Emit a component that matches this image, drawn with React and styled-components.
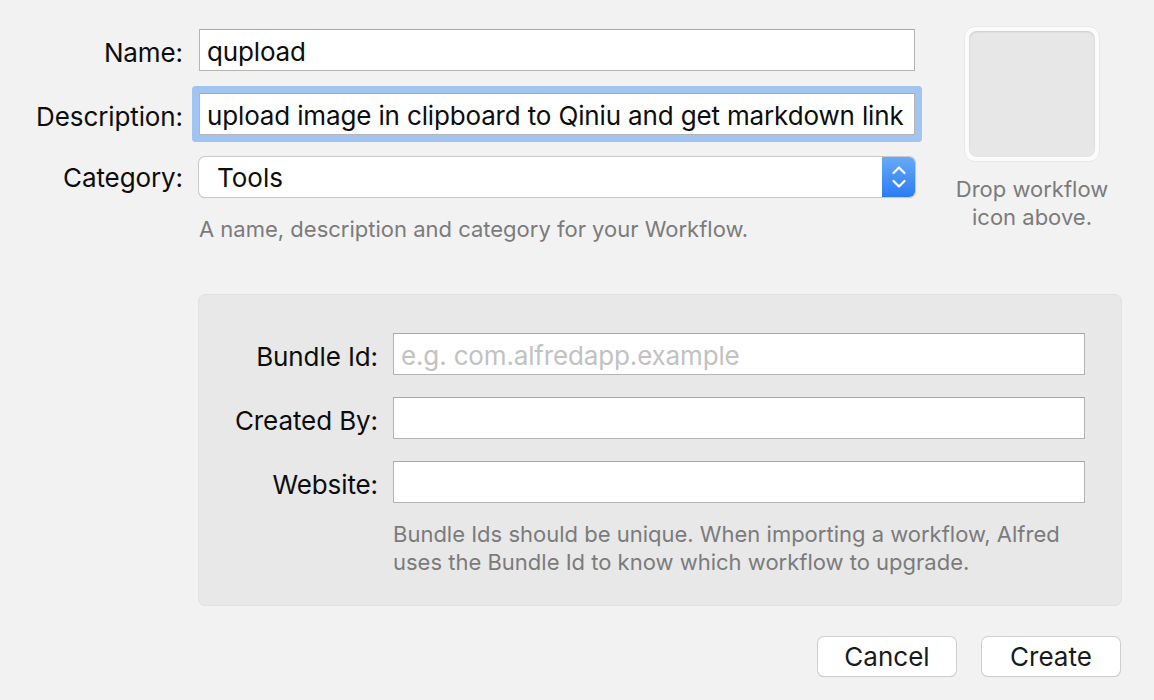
import React from "react";
import styled, { createGlobalStyle } from "styled-components";

const Global = createGlobalStyle`
  html, body { margin: 0; padding: 0; background: #f2f2f2; }
  body { font-family: Inter, "Open Sans", sans-serif; color: #111; }
`;

const Page = styled.div`
  width: 1154px;
  height: 700px;
  box-sizing: border-box;
  padding: 25px 33px 0 0;
  display: flex;
  flex-direction: column;
  overflow: hidden;
`;

const Top = styled.div`
  display: grid;
  grid-template-columns: 183px 716px 169px;
  column-gap: 16px;
  align-items: start;
`;

const TopFields = styled.div`
  grid-column: 1 / 3;
  display: grid;
  grid-template-columns: 183px 716px;
  column-gap: 16px;
  row-gap: 22px;
  align-items: center;
  padding-top: 4px;
`;

const Label = styled.label`
  font-size: 26px;
  text-align: right;
  color: #0d0d0d;
  letter-spacing: -0.1px;
  white-space: nowrap;
  padding-top: ${(p) => (p.$tight ? "0" : "4px")};
`;

const TextBox = styled.div`
  height: 42px;
  box-sizing: border-box;
  background: #fff;
  border: 1px solid #b4b4b4;
  border-top-color: #a8a8a8;
  display: flex;
  align-items: center;
  padding: 3px 7px 0;
  font-size: 26px;
  letter-spacing: -0.15px;
  color: ${(p) => (p.$placeholder ? "#c2c2c2" : "#0d0d0d")};
  white-space: nowrap;
  overflow: hidden;
  box-shadow: ${(p) => (p.$focus ? "0 0 0 7px #a1c5f0" : "none")};
  border-radius: ${(p) => (p.$focus ? "1px" : "0")};
`;

const Select = styled.div`
  height: 40px;
  box-sizing: border-box;
  background: #fff;
  border-radius: 6px;
  box-shadow: 0 0 0 1px #c8c8c8, 0 1px 1px rgba(0,0,0,0.18);
  display: flex;
  align-items: stretch;
  font-size: 26px;
  color: #0d0d0d;
  overflow: hidden;
`;

const SelectValue = styled.div`
  flex: 1;
  display: flex;
  align-items: center;
  padding-left: 18px;
`;

const Stepper = styled.div`
  width: 33px;
  background: linear-gradient(#66aaf8, #2b7bf5);
  display: flex;
  align-items: center;
  justify-content: center;
`;

const Hint = styled.div`
  grid-column: 2;
  font-size: 22px;
  color: #7b7b7b;
  margin-top: -3px;
  white-space: nowrap;
`;

const DropCol = styled.div`
  grid-column: 3;
  width: 136px;
  margin-left: 33px;
  display: flex;
  flex-direction: column;
  align-items: center;
`;

const DropWell = styled.div`
  width: 136px;
  height: 136px;
  flex-shrink: 0;
  box-sizing: border-box;
  border-radius: 11px;
  background: #fbfbfb;
  border: 1px solid #e9e9e9;
  padding: 4px;
  margin-top: 1px;
`;

const DropInner = styled.div`
  width: 100%;
  height: 100%;
  border-radius: 8px;
  background: #e7e7e7;
  box-shadow: inset 0 1px 2px rgba(0,0,0,0.12);
`;

const DropText = styled.div`
  margin-top: 13px;
  font-size: 22px;
  line-height: 28px;
  color: #7b7b7b;
  text-align: center;
  white-space: nowrap;
`;

const Panel = styled.div`
  margin: 52px 0 0 198px;
  width: 924px;
  height: 312px;
  box-sizing: border-box;
  background: #e8e8e8;
  border: 1px solid #e1e1e1;
  border-radius: 7px;
  padding: 38px 36px 0 0;
  display: grid;
  grid-template-columns: 179px 692px;
  column-gap: 15px;
  row-gap: 22px;
  align-content: start;
  align-items: center;
`;

const PanelHint = styled.div`
  grid-column: 2;
  font-size: 22px;
  line-height: 28px;
  color: #7b7b7b;
  margin-top: -5px;
  white-space: nowrap;
`;

const Buttons = styled.div`
  display: flex;
  justify-content: flex-end;
  gap: 26px;
  margin-top: 31px;
  padding-right: 1px;
`;

const Button = styled.button`
  width: 138px;
  height: 39px;
  border: none;
  border-radius: 6px;
  background: #fff;
  box-shadow: 0 0 0 1px #cfcfcf, 0 1px 1px rgba(0,0,0,0.2);
  font-family: Inter, "Open Sans", sans-serif;
  font-size: 26px;
  color: #1a1a1a;
  padding: 0;
`;

export default function App() {
  return (
    <>
      <Global />
      <Page>
        <Top>
          <TopFields>
            <Label>Name:</Label>
            <TextBox>qupload</TextBox>
            <Label>Description:</Label>
            <TextBox $focus>upload image in clipboard to Qiniu and get markdown link</TextBox>
            <Label $tight>Category:</Label>
            <Select>
              <SelectValue>Tools</SelectValue>
              <Stepper>
                <svg width="16" height="26" viewBox="0 0 16 26">
                  <path d="M2.5 9 L8 3.5 L13.5 9" fill="none" stroke="#fff" strokeWidth="2.2" strokeLinecap="round" strokeLinejoin="round" />
                  <path d="M2.5 17 L8 22.5 L13.5 17" fill="none" stroke="#fff" strokeWidth="2.2" strokeLinecap="round" strokeLinejoin="round" />
                </svg>
              </Stepper>
            </Select>
            <Hint>A name, description and category for your Workflow.</Hint>
          </TopFields>
          <DropCol>
            <DropWell>
              <DropInner />
            </DropWell>
            <DropText>
              Drop workflow
              <br />
              icon above.
            </DropText>
          </DropCol>
        </Top>
        <Panel>
          <Label>Bundle Id:</Label>
          <TextBox $placeholder>e.g. com.alfredapp.example</TextBox>
          <Label>Created By:</Label>
          <TextBox />
          <Label>Website:</Label>
          <TextBox />
          <PanelHint>
            Bundle Ids should be unique. When importing a workflow, Alfred
            <br />
            uses the Bundle Id to know which workflow to upgrade.
          </PanelHint>
        </Panel>
        <Buttons>
          <Button>Cancel</Button>
          <Button>Create</Button>
        </Buttons>
      </Page>
    </>
  );
}
